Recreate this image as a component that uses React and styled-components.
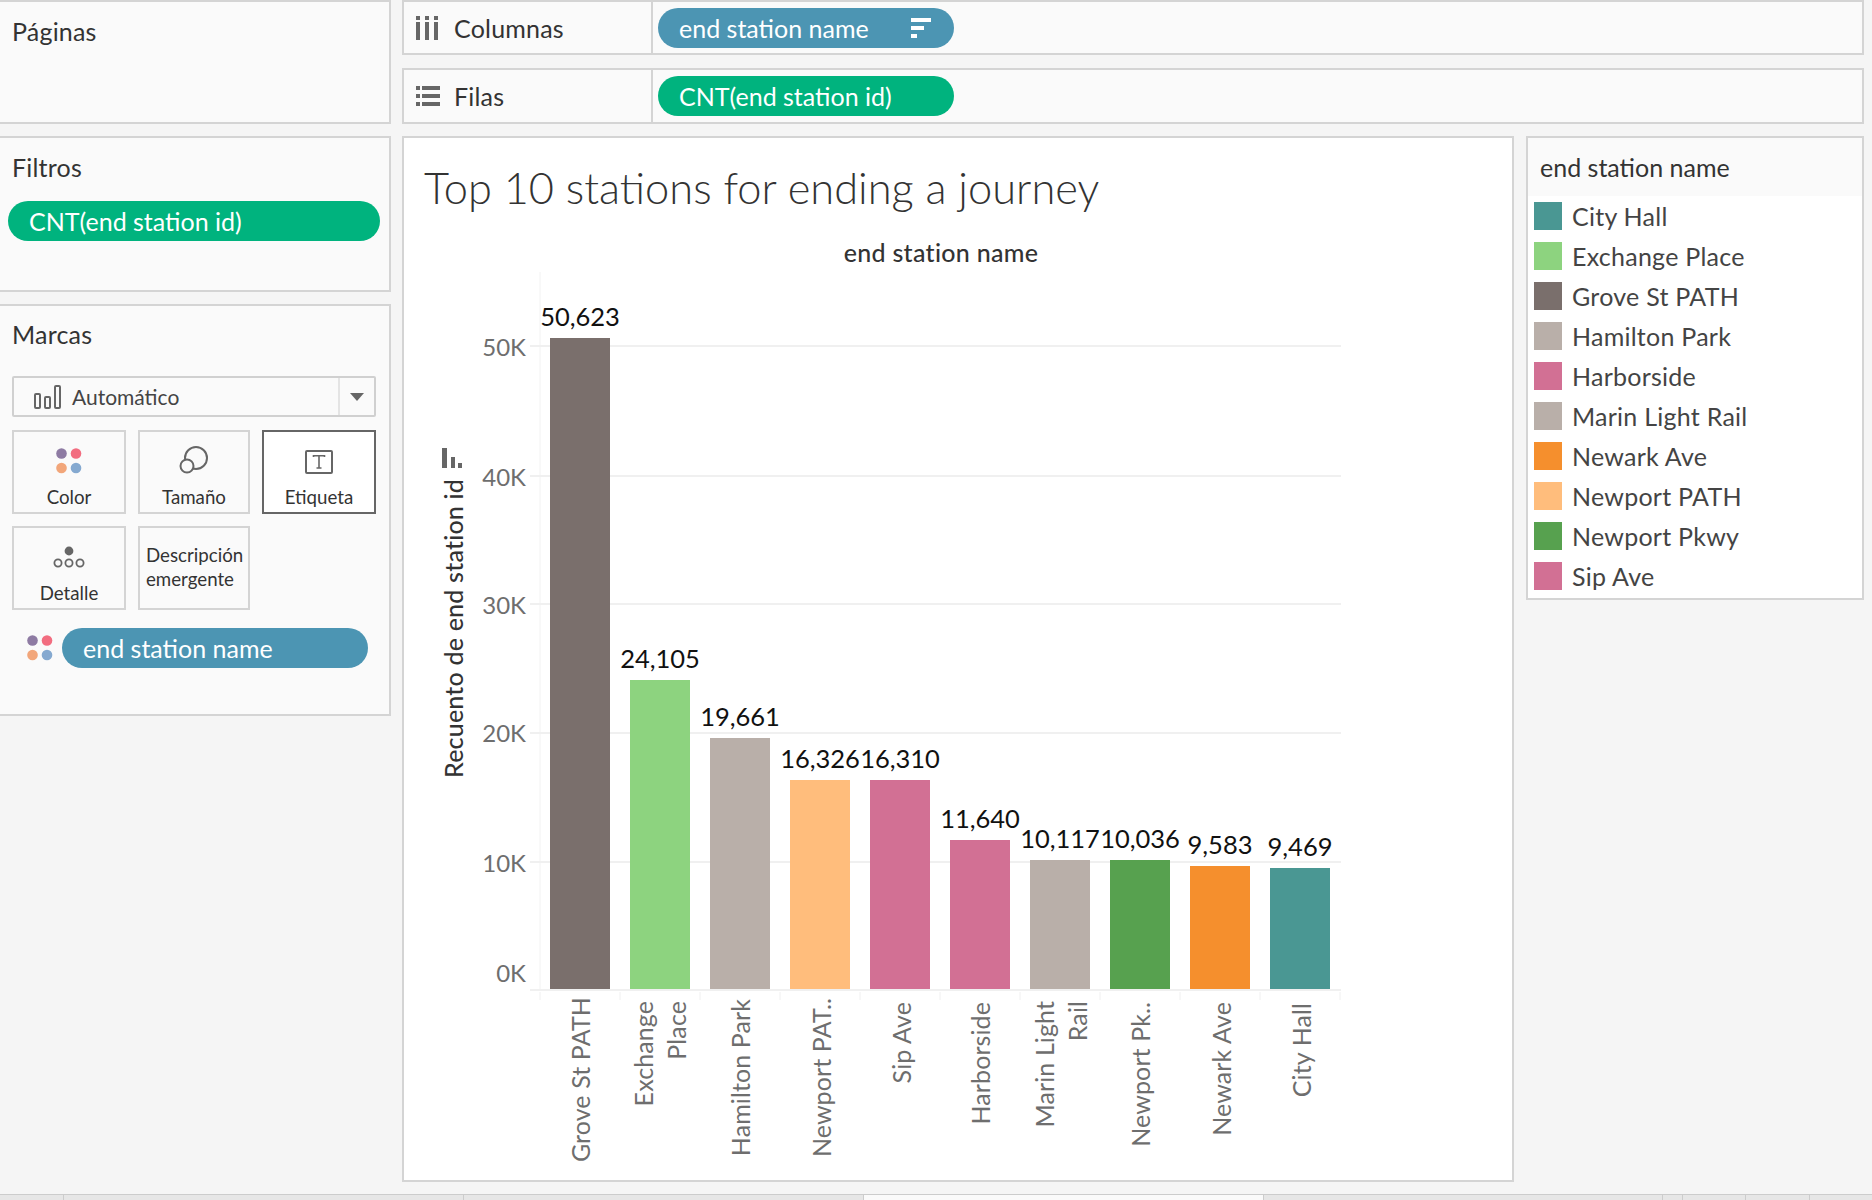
import React from "react";
import styled, { createGlobalStyle } from "styled-components";

const FONT = `"Lato", "Open Sans", "Liberation Sans", sans-serif`;

const Global = createGlobalStyle`
  html, body { margin: 0; padding: 0; background: #f5f5f5; }
  * { box-sizing: border-box; }
`;

const Page = styled.div`
  width: 1872px; height: 1200px; overflow: hidden; background: #f5f5f5;
  display: flex; flex-direction: column; font-family: ${FONT}; color: #333;
`;
const Main = styled.div`
  height: 1194px; display: flex; gap: 11px;
`;
const LeftCol = styled.div`
  width: 391px; flex: none; display: flex; flex-direction: column; gap: 12px;
`;
const RightCol = styled.div`
  width: 1462px; flex: none; display: flex; flex-direction: column;
`;
const Panel = styled.section`
  height: ${p => p.$h}px; background: #fafafa;
  border: 2px solid #d4d4d4; border-left: none;
`;
const PanelTitle = styled.div`
  font-size: 25px; letter-spacing: 0.2px; line-height: 30px; padding: ${p => p.$pt}px 0 0 12px; color: #333;
`;
const Shelf = styled.div`
  height: ${p => p.$h}px; margin-bottom: ${p => p.$mb}px;
  background: #fafafa; border: 2px solid #d4d4d4;
  display: flex; align-items: stretch;
`;
const ShelfLabel = styled.div`
  width: 249px; flex: none; border-right: 2px solid #d4d4d4;
  display: flex; align-items: center; gap: ${p => p.$gap}px; padding-left: 12px;
  font-size: 25px; letter-spacing: 0.2px; color: #333;
`;
const ShelfBody = styled.div`
  flex: 1; display: flex; align-items: center; padding-left: 5px;
`;
const Pill = styled.div`
  width: ${p => p.$w}px; height: 40px; border-radius: 20px; flex: none;
  background: ${p => p.$bg}; color: #fff; font-size: 25px; line-height: 40px;
  padding: 0 23px 0 21px; display: flex; align-items: center; justify-content: space-between;
`;
const FilterRow = styled.div`
  padding: 19px 0 0 8px;
`;
const Dropdown = styled.div`
  height: 41px; width: 364px; margin: 27px 0 0 12px; background: #fafafa;
  border: 2px solid #d0d0d0; border-radius: 2px; display: flex; align-items: center;
`;
const DropMain = styled.div`
  flex: 1; display: flex; align-items: center; gap: 11px; padding-left: 20px;
  font-size: 21px; color: #444; height: 100%;
`;
const DropArrow = styled.div`
  width: 36px; height: 100%; border-left: 2px solid #e4e4e4;
  display: flex; align-items: center; justify-content: center;
  &::after {
    content: ""; width: 0; height: 0;
    border-left: 7px solid transparent; border-right: 7px solid transparent;
    border-top: 8px solid #666;
  }
`;
const CardGrid = styled.div`
  margin: 13px 0 0 12px; display: grid; gap: 12px;
  grid-template-columns: 114px 112px 114px; grid-auto-rows: 84px;
`;
const Card = styled.div`
  border: 2px solid ${p => p.$active ? "#666" : "#d4d4d4"};
  background: ${p => p.$active ? "#fff" : "#fafafa"};
  display: flex; flex-direction: column; align-items: center;
  font-size: 18.7px; line-height: 24px; color: #333;
`;
const CardIcon = styled.div`
  height: 53px; flex: none; display: flex; align-items: flex-end; padding-bottom: 11px;
`;
const CardWrapText = styled.div`
  padding: 15px 0 0 6px; width: 100%; font-size: 18.7px; line-height: 24px; color: #333;
`;
const ColorPillRow = styled.div`
  display: flex; align-items: center; gap: 9px; margin: 18px 0 0 27px;
`;
const Viz = styled.section`
  width: 1112px; height: 1046px; flex: none; background: #fff; border: 2px solid #d4d4d4;
  display: flex; flex-direction: column;
`;
const VizTitle = styled.h1`
  margin: 0; height: 90px; flex: none; padding: 24px 0 0 20px;
  font-size: 43.4px; line-height: 50px; font-weight: 300; color: #333;
`;
const ChartSvg = styled.svg`
  display: block; flex: 1; width: 1108px; height: 952px;
  font-family: ${FONT};
`;
const VizRow = styled.div`
  display: flex; gap: 12px; align-items: flex-start;
`;
const Legend = styled.aside`
  width: 338px; height: 464px; flex: none; background: #fff; border: 2px solid #d4d4d4;
`;
const LegendHead = styled.div`
  height: 58px; background: #fafafa; padding: 14px 0 0 12px;
  font-size: 25px; line-height: 30px; color: #333;
`;
const LegendList = styled.ul`
  list-style: none; margin: 0; padding: 6px 0 0 6px;
  display: flex; flex-direction: column; gap: 12px;
`;
const LegendItem = styled.li`
  display: flex; align-items: center; gap: 10px; height: 28px;
  font-size: 25px; letter-spacing: 0.25px; color: #444;
`;
const Swatch = styled.span`
  width: 28px; height: 28px; flex: none; background: ${p => p.$c};
`;
const TabStrip = styled.div`
  height: 6px; flex: none; display: flex; background: #e6e6e6; border-top: 1px solid #ccc;
`;
const Tab = styled.div`
  width: ${p => p.$w}px; flex: none; border-right: 1px solid #ccc;
  background: ${p => p.$active ? "#fafafa" : "#e6e6e6"};
`;

const C = {
  teal: "#4A9793", green: "#8DD37F", grove: "#7A6F6C", taupe: "#B9AFA9",
  pink: "#D27094", orange: "#F58F2D", peach: "#FFBD7C", dgreen: "#57A14F",
};
const legend = [
  ["City Hall", C.teal], ["Exchange Place", C.green], ["Grove St PATH", C.grove],
  ["Hamilton Park", C.taupe], ["Harborside", C.pink], ["Marin Light Rail", C.taupe],
  ["Newark Ave", C.orange], ["Newport PATH", C.peach], ["Newport Pkwy", C.dgreen], ["Sip Ave", C.pink],
];
const bars = [
  [338, "50,623", C.grove, [["Grove St PATH", 590, 997]]],
  [680, "24,105", C.green, [["Exchange", 653, 1001], ["Place", 686, 1001]]],
  [738, "19,661", C.taupe, [["Hamilton Park", 750, 999]]],
  [780, "16,326", C.peach, [["Newport PAT..", 831, 998]]],
  [780, "16,310", C.pink, [["Sip Ave", 911, 1002]]],
  [840, "11,640", C.pink, [["Harborside", 990, 1002]]],
  [860, "10,117", C.taupe, [["Marin Light", 1054, 1001], ["Rail", 1087, 1001]]],
  [860, "10,036", C.dgreen, [["Newport Pk..", 1150, 1002]]],
  [866, "9,583", C.orange, [["Newark Ave", 1231, 1002]]],
  [868, "9,469", C.teal, [["City Hall", 1311, 1003]]],
];
const grid = [[50, 346, 356], [40, 476, 486], [30, 604, 614], [20, 733, 742], [10, 862, 872]];

const ColumnsIcon = () => (
  <svg width="22" height="24" viewBox="0 0 22 24" fill="#666">
    <rect x="0" y="0" width="4" height="4" /><rect x="9" y="0" width="4" height="4" /><rect x="18" y="0" width="4" height="4" />
    <rect x="0" y="6" width="4" height="18" /><rect x="9" y="6" width="4" height="18" /><rect x="18" y="6" width="4" height="18" />
  </svg>
);
const RowsIcon = () => (
  <svg width="24" height="20" viewBox="0 0 24 20" fill="#666">
    <rect x="0" y="0" width="4" height="4" /><rect x="6" y="0" width="18" height="4" />
    <rect x="0" y="8" width="4" height="4" /><rect x="6" y="8" width="18" height="4" />
    <rect x="0" y="16" width="4" height="4" /><rect x="6" y="16" width="18" height="4" />
  </svg>
);
const SortIcon = () => (
  <svg width="20" height="20" viewBox="0 0 20 20" fill="#fff">
    <rect x="0" y="0" width="20" height="4" /><rect x="0" y="8" width="13" height="4" /><rect x="0" y="16" width="6" height="4" />
  </svg>
);
const BarsIcon = () => (
  <svg width="27" height="24" viewBox="0 0 27 24" fill="none" stroke="#666" strokeWidth="2">
    <rect x="1" y="9" width="5" height="14" rx="1" /><rect x="11" y="12" width="5" height="11" rx="1" /><rect x="21" y="1" width="5" height="22" rx="1" />
  </svg>
);
const Dots = () => (
  <svg width="26" height="26" viewBox="0 0 26 26">
    <circle cx="5.5" cy="5.5" r="5.3" fill="#8E7BA3" /><circle cx="20" cy="5.5" r="5.3" fill="#F26D80" />
    <circle cx="5.5" cy="20" r="5.3" fill="#F2A67A" /><circle cx="20" cy="20" r="5.3" fill="#85A9D0" />
  </svg>
);
const SizeIcon = () => (
  <svg width="30" height="28" viewBox="0 0 30 28" fill="none" stroke="#666" strokeWidth="2">
    <circle cx="17" cy="12" r="11" /><circle cx="8" cy="20" r="6.5" fill="#fafafa" />
  </svg>
);
const LabelIcon = () => (
  <svg width="28" height="24" viewBox="0 0 28 24" fill="none">
    <rect x="1" y="1" width="26" height="22" rx="1" stroke="#666" strokeWidth="2" />
    <path d="M8.5 7V5.8H19.5V7M14 5.8V18M11.5 18H16.5" stroke="#666" strokeWidth="1.6" />
  </svg>
);
const DetailIcon = () => (
  <svg width="32" height="24" viewBox="0 0 32 24" fill="none" stroke="#666" strokeWidth="1.8">
    <circle cx="16" cy="5" r="4.4" fill="#666" stroke="none" />
    <circle cx="5" cy="17" r="3.6" /><circle cx="16" cy="17" r="3.6" /><circle cx="27" cy="17" r="3.6" />
  </svg>
);

const Chart = () => (
  <ChartSvg viewBox="404 228 1108 952">
    <text x="941" y="262" textAnchor="middle" fontSize="25" fontWeight="500" letterSpacing="0.3" fill="#333">end station name</text>
    <line x1="540" y1="272" x2="540" y2="989" stroke="#f2f2f2" strokeWidth="1" />
    {grid.map(([v, y]) => (
      <line key={v} x1="530" y1={y} x2="1341" y2={y} stroke="#f0f0f0" strokeWidth="2" />
    ))}
    <line x1="530" y1="990" x2="1341" y2="990" stroke="#f0f0f0" strokeWidth="2" />
    {grid.map(([v, , b]) => (
      <text key={v} x="526" y={b} textAnchor="end" fontSize="24" fill="#6e6e6e">{v}K</text>
    ))}
    <text x="526" y="982" textAnchor="end" fontSize="24" fill="#6e6e6e">0K</text>
    <path d="M442 448h5v20h-5zM451 457h4v11h-4zM458 463h4v5h-4z" fill="#666" />
    <text transform="translate(463,778) rotate(-90)" fontSize="25" fontWeight="500" letterSpacing="0.2" fill="#333">Recuento de end station id</text>
    {bars.map(([top, label, c, names], i) => {
      const x = 550 + i * 80;
      return (
        <g key={label}>
          <rect x={x} y={top} width="60" height={989 - top} fill={c} />
          <line x1={x - 10} y1="992" x2={x - 10} y2="1000" stroke="#f0f0f0" strokeWidth="1" />
          <text x={x + 30} y={top - 12} textAnchor="middle" fontSize="25.5" fill="#111">{label}</text>
          {names.map(([n, bx, ty]) => (
            <text key={n} transform={`translate(${bx},${ty}) rotate(-90)`} textAnchor="end" fontSize="25" letterSpacing="0.1" fill="#6e6e6e">{n}</text>
          ))}
        </g>
      );
    })}
    <line x1="1340" y1="992" x2="1340" y2="1000" stroke="#f0f0f0" strokeWidth="1" />
  </ChartSvg>
);

export default function App() {
  return (
    <Page>
      <Global />
      <Main>
        <LeftCol>
          <Panel $h={124}>
            <PanelTitle $pt={14}>Páginas</PanelTitle>
          </Panel>
          <Panel $h={156}>
            <PanelTitle $pt={14}>Filtros</PanelTitle>
            <FilterRow>
              <Pill $w={372} $bg="#00B37E">CNT(end station id)</Pill>
            </FilterRow>
          </Panel>
          <Panel $h={412}>
            <PanelTitle $pt={13}>Marcas</PanelTitle>
            <Dropdown>
              <DropMain><BarsIcon />Automático</DropMain>
              <DropArrow />
            </Dropdown>
            <CardGrid>
              <Card><CardIcon><Dots /></CardIcon>Color</Card>
              <Card><CardIcon><SizeIcon /></CardIcon>Tamaño</Card>
              <Card $active><CardIcon><LabelIcon /></CardIcon>Etiqueta</Card>
              <Card><CardIcon><DetailIcon /></CardIcon>Detalle</Card>
              <Card><CardWrapText>Descripción emergente</CardWrapText></Card>
            </CardGrid>
            <ColorPillRow>
              <Dots />
              <Pill $w={306} $bg="#4C95B3">end station name</Pill>
            </ColorPillRow>
          </Panel>
        </LeftCol>
        <RightCol>
          <Shelf $h={55} $mb={13}>
            <ShelfLabel $gap={16}><ColumnsIcon />Columnas</ShelfLabel>
            <ShelfBody>
              <Pill $w={296} $bg="#4C95B3">end station name<SortIcon /></Pill>
            </ShelfBody>
          </Shelf>
          <Shelf $h={56} $mb={12}>
            <ShelfLabel $gap={14}><RowsIcon />Filas</ShelfLabel>
            <ShelfBody>
              <Pill $w={296} $bg="#00B37E">CNT(end station id)</Pill>
            </ShelfBody>
          </Shelf>
          <VizRow>
            <Viz>
              <VizTitle>Top 10 stations for ending a journey</VizTitle>
              <Chart />
            </Viz>
            <Legend>
              <LegendHead>end station name</LegendHead>
              <LegendList>
                {legend.map(([n, c]) => (
                  <LegendItem key={n}><Swatch $c={c} />{n}</LegendItem>
                ))}
              </LegendList>
            </Legend>
          </VizRow>
        </RightCol>
      </Main>
      <TabStrip>
        <Tab $w={64} /><Tab $w={400} /><Tab $w={400} /><Tab $w={400} $active /><Tab $w={399} /><Tab $w={20} /><Tab $w={63} /><Tab $w={64} />
      </TabStrip>
    </Page>
  );
}
